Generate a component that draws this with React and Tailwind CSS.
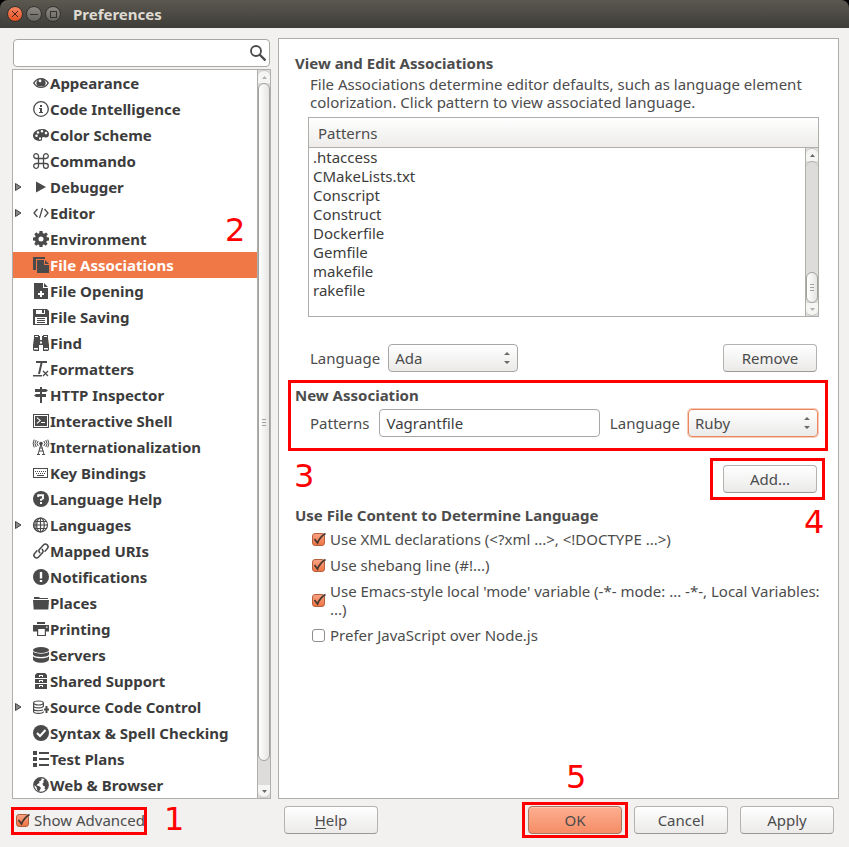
import { useState } from "react";

const icons = {
  eye: (
    <path
      fillRule="evenodd"
      d="M8 3C4.500 3 1.500 5 0 8c1.500 3 4.500 5 8 5s6.500-2 8-5c-1.500-3-4.500-5-8-5zM1.600 8C2.500 6.500 3.500 5.500 4.800 4.900a4 4 0 0 0 0 6.200C3.500 10.500 2.500 9.500 1.600 8zm12.800 0c-.9 1.500-1.900 2.500-3.200 3.100a4 4 0 0 0 0-6.200c1.300.6 2.300 1.600 3.200 3.100zM6 4.800c1.300-.6 2.400 0 2.400 1.100S7 7.600 5.900 6.700c-.4-.6-.3-1.400.1-1.900zM8 12c-1.500.1-2.600-.3-3.400-1 2 .8 4.800.8 6.800 0-.8.7-1.900 1.100-3.400 1z"
    />
  ),
  info: (
    <>
      <circle cx="8" cy="8" r="7.300" fill="none" stroke="currentColor" strokeWidth="1.300" />
      <path d="M7 4h2v2H7zM6 7h3v4h1v1H6v-1h1V8H6z" />
    </>
  ),
  palette: (
    <path
      fillRule="evenodd"
      d="M9 2C4 2 0 5 0 8.600 0 12 3 14 6.500 14c2 0 2.800-.7 2.500-2-.3-1.500.8-2.300 2.500-1.800 2.500.8 4.500-.2 4.500-3C16 4 13 2 9 2zM3.500 7.500a1.300 1.300 0 1 1 0 2.600 1.300 1.300 0 0 1 0-2.600zM5 4.200a1.300 1.300 0 1 1 0 2.600 1.300 1.300 0 0 1 0-2.600zM9 3a1.300 1.300 0 1 1 0 2.600A1.300 1.300 0 0 1 9 3zm4 1.800a1.300 1.300 0 1 1 0 2.600 1.300 1.300 0 0 1 0-2.600zM6 10.500h2v2H6z"
    />
  ),
  command: (
    <path
      d="M5.500 5.500h5v5h-5zM5.500 5.500H3.100a2.400 2.400 0 1 1 2.400-2.400zM10.500 5.500V3.100a2.400 2.400 0 1 1 2.400 2.400zM10.500 10.500h2.400a2.400 2.400 0 1 1-2.400 2.400zM5.500 10.500v2.400a2.400 2.400 0 1 1-2.400-2.400z"
      fill="none"
      stroke="currentColor"
      strokeWidth="1.300"
    />
  ),
  play: <path d="M3 2.500 13 8 3 13.500z" />,
  code: (
    <path
      d="M4.500 4 1 8l3.500 4M11.500 4 15 8l-3.500 4M9.500 3l-3 10"
      fill="none"
      stroke="currentColor"
      strokeWidth="1.300"
    />
  ),
  gear: (
    <path
      fillRule="evenodd"
      d="M6.500 0h3l.4 2.200 1.200.5L13 1.400 14.900 3.300l-1.500 1.700.5 1.300 2.100.3v3l-2.200.3-.5 1.300 1.400 1.600-2 2-1.700-1.300-1.300.5L9.500 16h-3l-.3-2-1.300-.5-1.700 1.300-2-2 1.300-1.700L2 9.800l-2-.3v-3l2.100-.3.5-1.200-1.300-1.700 2-2L5 2.700l1.200-.5zM8 5.500a2.500 2.500 0 1 0 0 5 2.500 2.500 0 0 0 0-5z"
    />
  ),
  files: (
    <>
      <path d="M0 0h12v2H3v11H0z" />
      <path d="M4 3h7v5h5v8H4zM12 3l4 4h-4z" />
    </>
  ),
  filePlus: (
    <path
      fillRule="evenodd"
      d="M1 0h9v5h5v11H1zM11 0l4 4h-4zM7 8v2H5v2h2v2h2v-2h2v-2H9V8z"
    />
  ),
  floppy: (
    <path
      fillRule="evenodd"
      d="M0 0h14l2 2v14H0zM3 1v4h9V1zM9 1h2v3H9zM2 8v7h12V8zM4 9h8v1H4zM4 11h8v1H4zM4 13h8v1H4z"
    />
  ),
  binoculars: (
    <path
      fillRule="evenodd"
      d="M1 0h5v1h1v4h2V1h1V0h5v3l1 7v5l-1 1h-5V10H6v6H1l-1-1v-5l1-7zM1 13v1.500h4V13zM11 13v1.500h4V13zM2 1v1h3V1zM11 1v1h3V1zM7 6.500v2h2v-2z"
    />
  ),
  clearFormat: (
    <>
      <path d="M3 0h11v2H9.500L7 13H5L7.500 2H3zM0 14h9v1.500H0z" />
      <path d="m10 10 5 5m0-5-5 5" stroke="currentColor" strokeWidth="1.300" />
    </>
  ),
  signpost: <path d="M7 0h2v2h4l2 1.500L13 5H9v2h4v3H9v6H7v-6H3L1 8.500 3 7h4V5H2V2h5z" />,
  terminal: (
    <path
      fillRule="evenodd"
      d="M0 1h16v14H0zM1 2v12h14V2zM2 3h12v10H2zM3.500 5l3 2.500-3 2.500 .8.800L8 7.500 4.300 4.200zM8 9v1h4V9z"
    />
  ),
  tower: (
    <>
      <circle cx="8" cy="4.500" r="1.800" />
      <path
        d="M8 5 5 15.500M8 5l3 10.500M6.500 9h3M6 12h4.500M4 15.500h3M9 15.500h3M5.200 2a3.500 3.500 0 0 0 0 5M10.800 2a3.500 3.500 0 0 1 0 5M3.200 1a6 6 0 0 0 0 7M12.800 1a6 6 0 0 1 0 7M1.200.6a8 8 0 0 0 0 7.800M14.800.6a8 8 0 0 1 0 7.800"
        fill="none"
        stroke="currentColor"
      />
    </>
  ),
  keyboard: (
    <path
      fillRule="evenodd"
      d="M0 3h15v10H0zM1 4v8h13V4zM2 6h1v1H2zM4 6h1v1H4zM6 6h1v1H6zM8 6h1v1H8zM10 6h1v1h-1zM12 6h1v1h-1zM3 8h1v1H3zM5 8h1v1H5zM7 8h1v1H7zM9 8h1v1H9zM11 8h1v1h-1zM4 10h7v1H4z"
    />
  ),
  question: (
    <>
      <circle cx="8" cy="8" r="8" />
      <path d="M5.200 6V4.300H10V7.500L8 8.500v1.300" fill="none" stroke="white" strokeWidth="1.900" />
      <path d="M7 11h2v2H7z" fill="white" />
    </>
  ),
  globe: (
    <>
      <path d="M5 1A7.500 7.500 0 0 0 5 15L3.500 12V4z" fillOpacity="0.6" />
      <g fill="none" stroke="currentColor" strokeWidth="1.200">
        <circle cx="7.500" cy="8" r="7" />
        <ellipse cx="7.500" cy="8" rx="3.800" ry="7" />
        <path d="M7.500 1v14M.5 8h14M1.500 4.500h12M1.500 11.500h12" />
      </g>
    </>
  ),
  link: (
    <g fill="none" stroke="currentColor" strokeWidth="1.500" strokeLinecap="round">
      <path d="M6.800 9.800C5.500 8.500 5.700 7 6.800 5.900l3.600-3.900c2.400-2.400 6.300 1 4 3.600l-2.400 2.600" />
      <path d="M9.200 6.200c1.300 1.300 1.100 2.800 0 3.900L5.600 14c-2.400 2.400-6.300-1-4-3.600L4 7.800" />
    </g>
  ),
  alert: (
    <>
      <circle cx="8" cy="8" r="8" />
      <path d="M6.800 3h2.400v6.500H6.800zM6.800 11h2.400v2H6.800z" fill="white" />
    </>
  ),
  folder: <path d="M1 2h5l1 1h8v1H1zM0 5h16l-.7 9.500H.7z" />,
  printer: (
    <path
      fillRule="evenodd"
      d="M4 1h8v2H4zM0 4h16v6.500h-3V15H4v-4.500H0zM5.200 8v6h6.600V8zM13 5.500v1.200h1.500V5.500z"
    />
  ),
  database: (
    <>
      <ellipse cx="8" cy="3" rx="8" ry="3" />
      <path d="M0 4.600c2 2.800 14 2.800 16 0v3.200c-2 3-14 3-16 0zM0 9.200c2 2.800 14 2.800 16 0v3c0 4.600-16 4.600-16 0z" />
    </>
  ),
  cabinet: (
    <path
      fillRule="evenodd"
      d="M4 0h8l2 2v3H2V2zM6 2v2h1V3h2v1h1V2zM2 6h12v4H2zM6 7v2h1V8h2v1h1V7zM2 11h12v5H2zM6 12v2h1v-1h2v1h1v-2z"
    />
  ),
  dbPlus: (
    <>
      <g fill="none" stroke="currentColor" strokeWidth="1.200">
        <ellipse cx="5.500" cy="4" rx="4.900" ry="2" />
        <path d="M.6 4v8.500c0 2.500 9.800 2.500 9.800 0M10.400 4v3M.6 7c0 2.500 9.800 2.500 9.800 0M.6 10c0 2 7 2.300 9.300.8" />
      </g>
      <path d="M12.500 7h2v2.500H16v2h-1.500V14h-2v-2.500H11v-2h1.500z" />
    </>
  ),
  check: (
    <>
      <circle cx="8" cy="8" r="8" />
      <path d="m4 8 3 3 5.500-6" fill="none" stroke="white" strokeWidth="2" />
    </>
  ),
  list: <path d="M0 0h4v4H0zM0 6h4v4H0zM0 12h4v4H0zM6 1h10v2H6zM6 7h10v2H6zM6 13h10v2H6z" />,
  earth: (
    <>
      <circle cx="8" cy="8" r="7.300" fill="none" stroke="currentColor" strokeWidth="1.200" />
      <path d="M3 3 6 1l3 .5-1 2-2 1 .5 1.500L4.500 7l-1 1.500L6 9l2 2-1.500 2.500L6 15 4 12.500 3.500 10 1 8V5zM10 4l2-2 3 4v4l-2 3-1.500-1.500.5-2-2-1-.5-2L11 5z" />
    </>
  ),
};

const categories = [
  { label: "Appearance", icon: "eye" },
  { label: "Code Intelligence", icon: "info" },
  { label: "Color Scheme", icon: "palette" },
  { label: "Commando", icon: "command" },
  { label: "Debugger", icon: "play", children: true },
  { label: "Editor", icon: "code", children: true },
  { label: "Environment", icon: "gear" },
  { label: "File Associations", icon: "files" },
  { label: "File Opening", icon: "filePlus" },
  { label: "File Saving", icon: "floppy" },
  { label: "Find", icon: "binoculars" },
  { label: "Formatters", icon: "clearFormat" },
  { label: "HTTP Inspector", icon: "signpost" },
  { label: "Interactive Shell", icon: "terminal" },
  { label: "Internationalization", icon: "tower" },
  { label: "Key Bindings", icon: "keyboard" },
  { label: "Language Help", icon: "question" },
  { label: "Languages", icon: "globe", children: true },
  { label: "Mapped URIs", icon: "link" },
  { label: "Notifications", icon: "alert" },
  { label: "Places", icon: "folder" },
  { label: "Printing", icon: "printer" },
  { label: "Servers", icon: "database" },
  { label: "Shared Support", icon: "cabinet" },
  { label: "Source Code Control", icon: "dbPlus", children: true },
  { label: "Syntax & Spell Checking", icon: "check" },
  { label: "Test Plans", icon: "list" },
  { label: "Web & Browser", icon: "earth" },
];

const patterns = [
  ".htaccess",
  "CMakeLists.txt",
  "Conscript",
  "Construct",
  "Dockerfile",
  "Gemfile",
  "makefile",
  "rakefile",
];

function CategoryIcon({ name }) {
  return (
    <svg
      viewBox="0 0 16 16"
      className="size-4 shrink-0 overflow-visible text-[#4a4a4a]"
      fill="currentColor"
      aria-hidden="true"
    >
      {icons[name]}
    </svg>
  );
}

function Button({ children, primary }) {
  return (
    <button
      type="button"
      className={`h-7 w-[94px] rounded border text-center ${
        primary
          ? "border-[#a9765f] bg-linear-to-b from-[#fdae90] to-[#f58d66] shadow-[inset_0_1px_0_#ffc5ae]"
          : "border-[#b5b3b0] border-b-[#9b9996] bg-linear-to-b from-white to-[#ebeae9]"
      }`}
    >
      {children}
    </button>
  );
}

function Checkbox({ children, defaultChecked }) {
  return (
    <label className="flex items-center gap-[5px]">
      <span className="grid size-[13px] shrink-0">
        <input
          type="checkbox"
          defaultChecked={defaultChecked}
          className="peer size-[13px] appearance-none rounded-[3px] border border-[#8f8d8a] bg-white [grid-area:1/1] checked:border-[#b5603c] checked:bg-linear-to-b checked:from-[#f9a283] checked:to-[#ee7443]"
        />
        <svg
          viewBox="0 0 13 13"
          className="pointer-events-none invisible z-10 size-[13px] overflow-visible [grid-area:1/1] peer-checked:visible"
          aria-hidden="true"
        >
          <path d="m2.500 6 3 4C7 6 9.500 3 13.500.5" fill="none" stroke="#4a3931" strokeWidth="1.800" />
        </svg>
      </span>
      <span>{children}</span>
    </label>
  );
}

function Select({ id, value, options, focused }) {
  return (
    <span
      className={`grid h-7 w-[130px] shrink-0 items-center rounded ${
        focused ? "border-[#e8885f] ring-1 ring-[#f9c9b5]" : "border-[#a9a7a4]"
      }`}
    >
      <select
        id={id}
        defaultValue={value}
        className="h-7 w-full appearance-none rounded border border-inherit bg-linear-to-b from-white to-[#ebeae9] px-1.5 outline-none [grid-area:1/1]"
      >
        {options.map((option) => (
          <option key={option}>{option}</option>
        ))}
      </select>
      <svg
        viewBox="0 0 6 12"
        className="pointer-events-none mr-2 h-3 w-1.5 justify-self-end [grid-area:1/1]"
        fill="#6b6966"
        aria-hidden="true"
      >
        <path d="M0 3 3 0l3 3zM0 9h6l-3 3z" />
      </svg>
    </span>
  );
}

function Grip() {
  return (
    <span className="flex flex-col gap-[2px]">
      <span className="h-px w-1 bg-[#a5a3a0]" />
      <span className="h-px w-1 bg-[#a5a3a0]" />
      <span className="h-px w-1 bg-[#a5a3a0]" />
    </span>
  );
}

function Scrollbar({ atEnd }) {
  return (
    <div
      className="flex w-[13px] shrink-0 flex-col border-l border-[#b0aeab] bg-[#dddcdb]"
      aria-hidden="true"
    >
      <div className="flex h-[13px] items-center justify-center rounded-t-full border-t border-[#c4c2bf] bg-[#f5f5f4]">
        <svg viewBox="0 0 5 3" className="h-[3px] w-[5px]" fill={atEnd ? "#6b6966" : "#b5b3b0"}>
          <path d="M0 3 2.500 0 5 3z" />
        </svg>
      </div>
      {atEnd && <div className="flex-1 rounded-t-full border-t border-[#b0aeab]" />}
      <div
        className={`flex items-center justify-center rounded-full border border-[#a3a19e] bg-linear-to-r from-white to-[#e6e5e4] ${
          atEnd ? "h-[31px]" : "flex-1"
        }`}
      >
        <Grip />
      </div>
      {!atEnd && <div className="h-6" />}
      <div className="flex h-[13px] items-center justify-center rounded-b-full border-b border-[#c4c2bf] bg-[#f5f5f4]">
        <svg viewBox="0 0 5 3" className="h-[3px] w-[5px]" fill={atEnd ? "#b5b3b0" : "#6b6966"}>
          <path d="M0 0h5L2.500 3z" />
        </svg>
      </div>
    </div>
  );
}

// Red step frames and numbers lie over the dialog
function Frame({ className }) {
  return <div className={`pointer-events-none absolute border-3 border-[#ff0000] ${className}`} />;
}

function Step({ children, className }) {
  return (
    <span
      className={`pointer-events-none absolute font-['DejaVu_Sans',sans-serif] text-[32px] leading-8 text-[#ff0000] ${className}`}
    >
      {children}
    </span>
  );
}

function TitleBar() {
  return (
    <div className="bg-black">
      <header className="flex h-7 items-center rounded-t-lg bg-linear-to-b from-[#5b5850] to-[#3e3d39] px-[7px] text-[#dfdbd2]">
        <div className="flex gap-[3px]">
          <button
            type="button"
            aria-label="Close"
            className="flex size-4 items-center justify-center rounded-full border border-[#33322e] bg-linear-to-b from-[#f58360] to-[#e4511f]"
          >
            <svg viewBox="0 0 6 6" className="size-1.5" stroke="#4a2013" strokeWidth="1">
              <path d="m0 0 6 6M6 0 0 6" />
            </svg>
          </button>
          <button
            type="button"
            aria-label="Minimize"
            className="flex size-4 items-center justify-center rounded-full border border-[#33322e] bg-linear-to-b from-[#8b8982] to-[#686660]"
          >
            <span className="h-px w-2 bg-[#33322e]" />
          </button>
          <button
            type="button"
            aria-label="Maximize"
            className="flex size-4 items-center justify-center rounded-full border border-[#33322e] bg-linear-to-b from-[#8b8982] to-[#686660]"
          >
            <span className="size-[7px] border border-[#33322e]" />
          </button>
        </div>
        <h1 className="ml-3 font-bold">Preferences</h1>
      </header>
    </div>
  );
}

function Sidebar() {
  const [selected, setSelected] = useState("File Associations");

  return (
    <div className="relative flex w-[259px] shrink-0 flex-col">
      <div className="m-px mb-0.5 flex h-7 items-center rounded border border-[#a9a7a4] bg-white pr-[3px]">
        <input
          type="search"
          aria-label="Filter preferences"
          className="min-w-0 flex-1 bg-transparent px-1.5 outline-none"
        />
        <svg
          viewBox="0 0 16 16"
          className="size-4"
          fill="none"
          stroke="#4a4a4a"
          strokeWidth="1.800"
          aria-hidden="true"
        >
          <circle cx="6" cy="6" r="5" />
          <path d="m9.500 9.500 6 6" strokeWidth="2.400" />
        </svg>
      </div>
      <div className="flex border border-[#b0aeab] bg-white">
        <ul className="flex-1 font-bold text-[#3c3c3c]">
          {categories.map((category) => (
            <li key={category.label}>
              <button
                type="button"
                onClick={() => setSelected(category.label)}
                className={`flex h-[26px] w-full items-center whitespace-nowrap text-left ${
                  selected === category.label ? "bg-[#f07746] text-white" : ""
                }`}
              >
                <span className="w-5 shrink-0 pl-0.5">
                  {category.children && (
                    <svg viewBox="0 0 7 8" className="h-2 w-[7px]" aria-hidden="true">
                      <path d="M.5.5 6 4 .5 7.500z" fill="#888" stroke="#444" />
                    </svg>
                  )}
                </span>
                <CategoryIcon name={category.icon} />
                <span className="pl-px">{category.label}</span>
              </button>
            </li>
          ))}
        </ul>
        <Scrollbar />
      </div>
      <Step className="top-44 left-[213px]">2</Step>
    </div>
  );
}

function AssociationsPanel() {
  return (
    <main className="min-w-0 flex-1 border border-[#b0aeab] bg-white pt-[15px] pr-[19px] pl-4">
      <section>
        <h2 className="leading-[18px] font-bold">View and Edit Associations</h2>
        <p className="mt-[3px] pl-[15px] leading-[18px]">
          File Associations determine editor defaults, such as language element colorization. Click
          pattern to view associated language.
        </p>
        <div className="mt-1.5 ml-[13px] flex h-[200px] flex-col border border-[#b0aeab]">
          <div className="flex h-[30px] shrink-0 items-center border-b border-[#b0aeab] bg-linear-to-b from-white to-[#edecea] px-[9px]">
            Patterns
          </div>
          <div className="flex min-h-0 flex-1">
            <ul className="flex-1 px-1 leading-[19px] text-[#3c3c3c]">
              {patterns.map((pattern) => (
                <li key={pattern}>{pattern}</li>
              ))}
            </ul>
            <Scrollbar atEnd />
          </div>
        </div>
        <div className="mt-[27px] flex items-center pl-[15px]">
          <label htmlFor="language" className="mr-2">
            Language
          </label>
          <Select id="language" value="Ada" options={["Ada", "Python", "Ruby"]} />
          <div className="mr-0.5 ml-auto flex">
            <Button>Remove</Button>
          </div>
        </div>
      </section>

      <section className="relative mt-3.5">
        <h2 className="leading-[18px] font-bold">New Association</h2>
        <div className="mt-[5px] mr-px flex items-center pl-[15px]">
          <label htmlFor="new-pattern" className="mr-2.5">
            Patterns
          </label>
          <input
            id="new-pattern"
            type="text"
            defaultValue="Vagrantfile"
            className="h-7 min-w-0 flex-1 rounded border border-[#a9a7a4] px-1.5 text-[#3c3c3c] outline-none"
          />
          <label htmlFor="new-language" className="mr-2 ml-2.5">
            Language
          </label>
          <Select id="new-language" value="Ruby" options={["Ada", "Python", "Ruby"]} focused />
        </div>
        <Frame className="-top-1.5 -right-[9px] -left-[7px] h-[71px]" />
        <Step className="top-[74px] -left-px">3</Step>
      </section>

      <div className="mt-7 flex justify-end pr-0.5">
        <div className="relative flex">
          <Button>Add...</Button>
          <Frame className="-top-[7px] -right-2 -bottom-[7px] -left-[13px]" />
          <Step className="top-[41px] left-[81px]">4</Step>
        </div>
      </div>

      <section className="mt-[13px]">
        <h2 className="leading-[18px] font-bold">Use File Content to Determine Language</h2>
        <div className="mt-1.5 -mr-2 flex flex-col gap-2 pl-[17px] leading-[18px]">
          <Checkbox defaultChecked>Use XML declarations (&lt;?xml ...&gt;, &lt;!DOCTYPE ...&gt;)</Checkbox>
          <Checkbox defaultChecked>Use shebang line (#!...)</Checkbox>
          <Checkbox defaultChecked>
            Use Emacs-style local 'mode' variable (-*- mode: ... -*-, Local Variables: ...)
          </Checkbox>
          <Checkbox>Prefer JavaScript over Node.js</Checkbox>
        </div>
      </section>
    </main>
  );
}

export default function App() {
  return (
    <div className="flex min-h-screen flex-col bg-[#f2f1f0] font-['Noto_Sans','Open_Sans',sans-serif] text-[15px] leading-5 text-[#4c4c4c]">
      <TitleBar />
      <div className="flex gap-[7px] pt-2.5 pr-2.5 pl-3">
        <Sidebar />
        <AssociationsPanel />
      </div>
      <footer className="flex items-center pt-[7px] pr-[15px] pb-3 pl-3">
        <div className="relative w-[272px] shrink-0 pl-1 whitespace-nowrap">
          <Checkbox defaultChecked>Show Advanced</Checkbox>
          <Frame className="-top-[3px] -left-px h-7 w-[136px]" />
          <Step className="-top-[7px] left-[152px]">1</Step>
        </div>
        <Button>
          <u className="underline-offset-2">H</u>elp
        </Button>
        <div className="ml-auto flex gap-3">
          <div className="relative flex">
            <Button primary>OK</Button>
            <Frame className="-inset-x-1.5 -inset-y-1" />
            <Step className="-top-[45px] left-[38px]">5</Step>
          </div>
          <Button>Cancel</Button>
          <Button>Apply</Button>
        </div>
      </footer>
    </div>
  );
}
